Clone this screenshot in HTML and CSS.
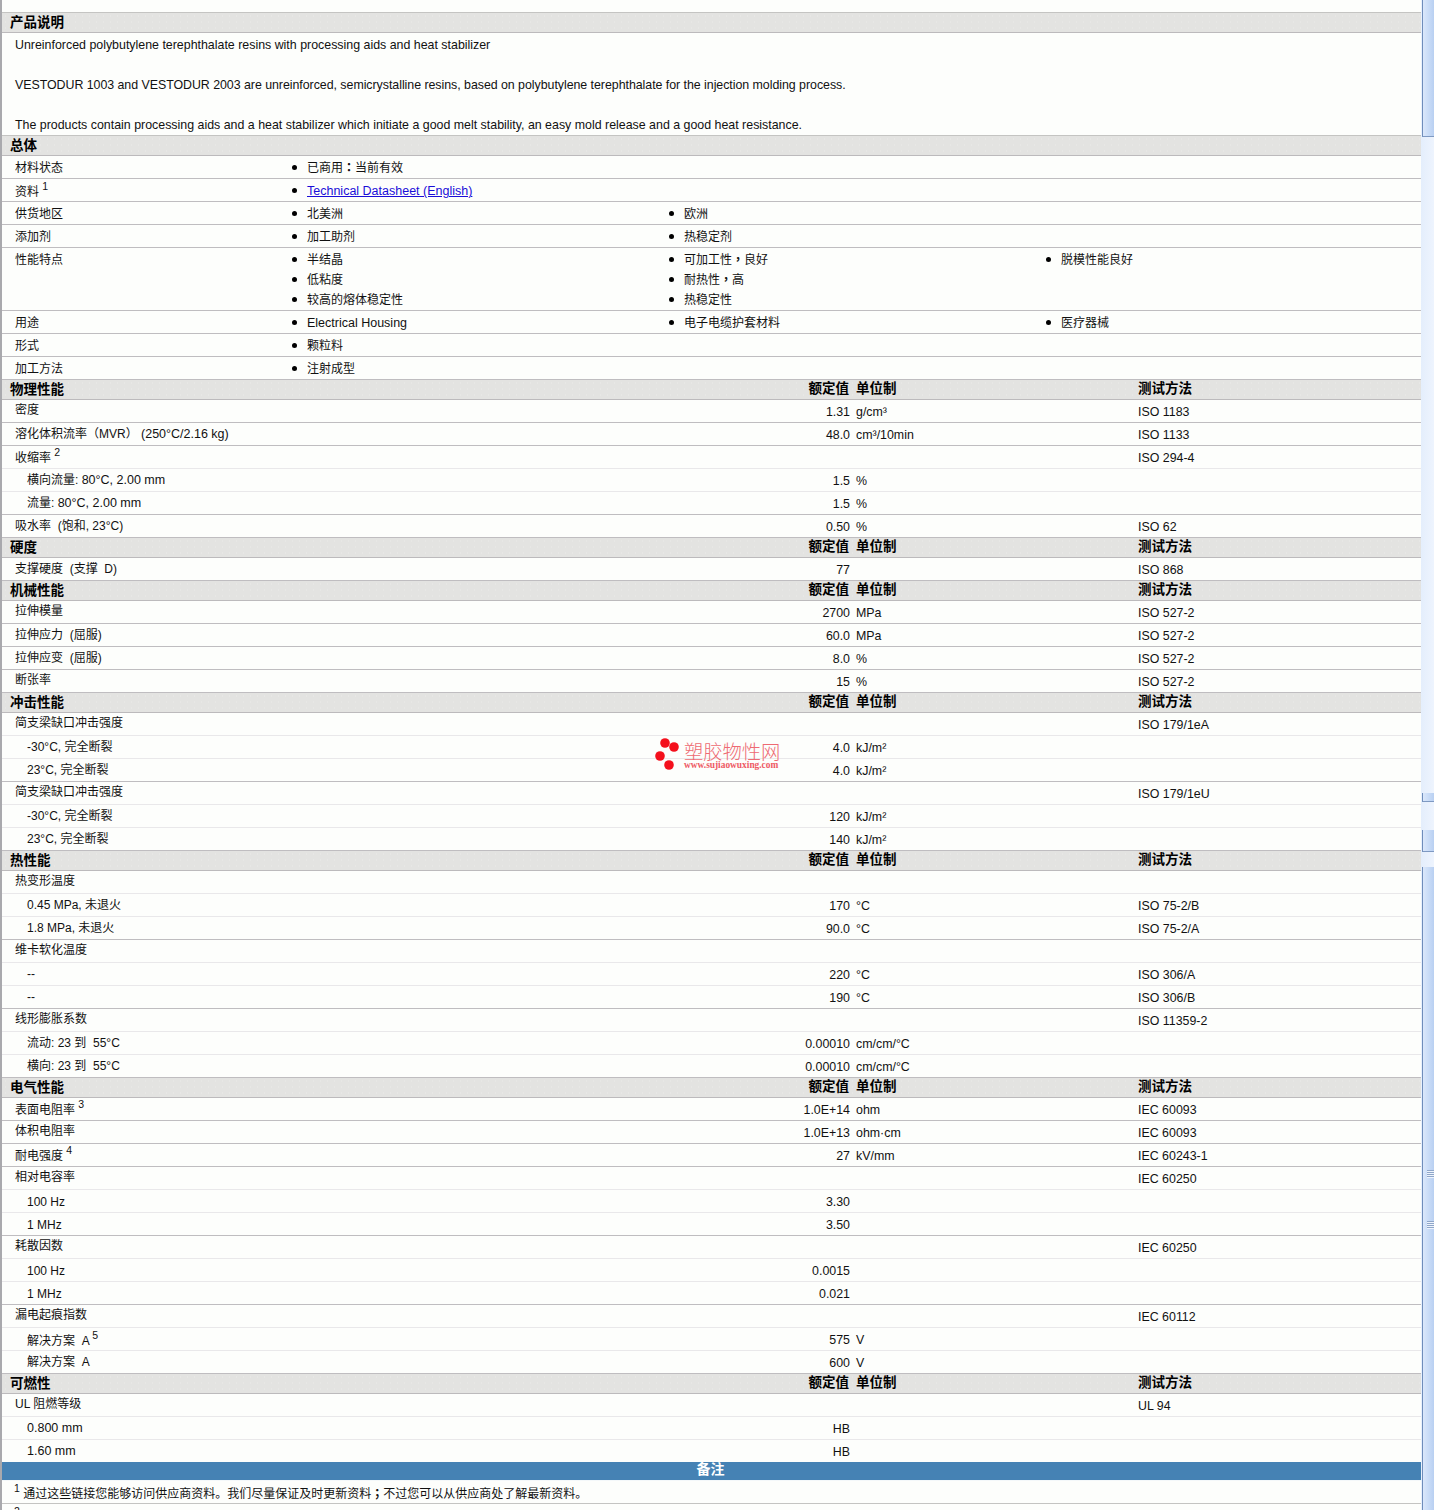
FILE: index.html
```html
<!DOCTYPE html>
<html lang="zh">
<head>
<meta charset="utf-8">
<title>VESTODUR 1003</title>
<link rel="stylesheet" href="styles.css">
</head>
<body>
<div class="page">
  <main class="sheet">
    <div class="section first"><span>产品说明</span></div>
    <div class="desc">
      <p>Unreinforced polybutylene terephthalate resins with processing aids and heat stabilizer</p>
      <p class="tight">VESTODUR 1003 and VESTODUR 2003 are unreinforced, semicrystalline resins, based on polybutylene terephthalate for the injection molding process.</p>
      <p>The products contain processing aids and a heat stabilizer which initiate a good melt stability, an easy mold release and a good heat resistance.</p>
    </div>

    <div class="section"><span>总体</span></div>
    <div class="info"><div class="label">材料状态</div><ul class="items"><li>已商用<span class="cp" lang="zh-Hant">：</span>当前有效</li></ul></div>
    <div class="info"><div class="label low">资料 <sup>1</sup></div><ul class="items"><li><a href="#">Technical Datasheet (English)</a></li></ul></div>
    <div class="info"><div class="label">供货地区</div><ul class="items"><li>北美洲</li><li>欧洲</li></ul></div>
    <div class="info"><div class="label">添加剂</div><ul class="items"><li>加工助剂</li><li>热稳定剂</li></ul></div>
    <div class="info"><div class="label">性能特点</div><ul class="items"><li>半结晶</li><li>可加工性<span class="cp" lang="zh-Hant">，</span>良好</li><li>脱模性能良好</li><li>低粘度</li><li>耐热性<span class="cp" lang="zh-Hant">，</span>高</li><li class="empty"></li><li>较高的熔体稳定性</li><li>热稳定性</li></ul></div>
    <div class="info"><div class="label">用途</div><ul class="items"><li><span class="lat">Electrical Housing</span></li><li>电子电缆护套材料</li><li>医疗器械</li></ul></div>
    <div class="info"><div class="label">形式</div><ul class="items"><li>颗粒料</li></ul></div>
    <div class="info"><div class="label">加工方法</div><ul class="items"><li>注射成型</li></ul></div>

    <div class="section cols"><span>物理性能</span><span class="r">额定值</span><span class="u">单位制</span><span class="m">测试方法</span></div>
    <div class="row"><div class="n">密度</div><div class="v">1.31</div><div class="u">g/cm³</div><div class="t">ISO 1183</div></div>
    <div class="row"><div class="n mid">溶化体积流率（MVR） <span class="lat">(250°C/2.16 kg)</span></div><div class="v">48.0</div><div class="u">cm³/10min</div><div class="t">ISO 1133</div></div>
    <div class="row light"><div class="n low">收缩率 <sup>2</sup></div><div class="v"></div><div class="u"></div><div class="t">ISO 294-4</div></div>
    <div class="row light"><div class="n sub">横向流量: <span class="lat">80°C, 2.00 mm</span></div><div class="v">1.5</div><div class="u">%</div><div class="t"></div></div>
    <div class="row"><div class="n sub">流量: <span class="lat">80°C, 2.00 mm</span></div><div class="v">1.5</div><div class="u">%</div><div class="t"></div></div>
    <div class="row"><div class="n mid">吸水率&nbsp; (饱和, 23°C)</div><div class="v">0.50</div><div class="u">%</div><div class="t">ISO 62</div></div>

    <div class="section cols"><span>硬度</span><span class="r">额定值</span><span class="u">单位制</span><span class="m">测试方法</span></div>
    <div class="row"><div class="n mid">支撑硬度&nbsp; (支撑&nbsp; D)</div><div class="v">77</div><div class="u"></div><div class="t">ISO 868</div></div>

    <div class="section cols"><span>机械性能</span><span class="r">额定值</span><span class="u">单位制</span><span class="m">测试方法</span></div>
    <div class="row"><div class="n">拉伸模量</div><div class="v">2700</div><div class="u">MPa</div><div class="t">ISO 527-2</div></div>
    <div class="row"><div class="n mid">拉伸应力&nbsp; (屈服)</div><div class="v">60.0</div><div class="u">MPa</div><div class="t">ISO 527-2</div></div>
    <div class="row"><div class="n mid">拉伸应变&nbsp; (屈服)</div><div class="v">8.0</div><div class="u">%</div><div class="t">ISO 527-2</div></div>
    <div class="row"><div class="n">断张率</div><div class="v">15</div><div class="u">%</div><div class="t">ISO 527-2</div></div>

    <div class="section cols"><span>冲击性能</span><span class="r">额定值</span><span class="u">单位制</span><span class="m">测试方法</span></div>
    <div class="row light"><div class="n">简支梁缺口冲击强度</div><div class="v"></div><div class="u"></div><div class="t">ISO 179/1eA</div></div>
    <div class="row light"><div class="n sub">-30°C, 完全断裂</div><div class="v">4.0</div><div class="u">kJ/m²</div><div class="t"></div></div>
    <div class="row"><div class="n sub">23°C, 完全断裂</div><div class="v">4.0</div><div class="u">kJ/m²</div><div class="t"></div></div>
    <div class="row light"><div class="n">简支梁缺口冲击强度</div><div class="v"></div><div class="u"></div><div class="t">ISO 179/1eU</div></div>
    <div class="row light"><div class="n sub">-30°C, 完全断裂</div><div class="v">120</div><div class="u">kJ/m²</div><div class="t"></div></div>
    <div class="row"><div class="n sub">23°C, 完全断裂</div><div class="v">140</div><div class="u">kJ/m²</div><div class="t"></div></div>

    <div class="section cols"><span>热性能</span><span class="r">额定值</span><span class="u">单位制</span><span class="m">测试方法</span></div>
    <div class="row light"><div class="n">热变形温度</div><div class="v"></div><div class="u"></div><div class="t"></div></div>
    <div class="row light"><div class="n sub">0.45 MPa, 未退火</div><div class="v">170</div><div class="u">°C</div><div class="t">ISO 75-2/B</div></div>
    <div class="row"><div class="n sub">1.8 MPa, 未退火</div><div class="v">90.0</div><div class="u">°C</div><div class="t">ISO 75-2/A</div></div>
    <div class="row light"><div class="n">维卡软化温度</div><div class="v"></div><div class="u"></div><div class="t"></div></div>
    <div class="row light"><div class="n sub">--</div><div class="v">220</div><div class="u">°C</div><div class="t">ISO 306/A</div></div>
    <div class="row"><div class="n sub">--</div><div class="v">190</div><div class="u">°C</div><div class="t">ISO 306/B</div></div>
    <div class="row light"><div class="n">线形膨胀系数</div><div class="v"></div><div class="u"></div><div class="t">ISO 11359-2</div></div>
    <div class="row light"><div class="n sub">流动: 23 到 &nbsp;55°C</div><div class="v">0.00010</div><div class="u">cm/cm/°C</div><div class="t"></div></div>
    <div class="row"><div class="n sub">横向: 23 到 &nbsp;55°C</div><div class="v">0.00010</div><div class="u">cm/cm/°C</div><div class="t"></div></div>

    <div class="section cols"><span>电气性能</span><span class="r">额定值</span><span class="u">单位制</span><span class="m">测试方法</span></div>
    <div class="row"><div class="n low">表面电阻率 <sup>3</sup></div><div class="v">1.0E+14</div><div class="u">ohm</div><div class="t">IEC 60093</div></div>
    <div class="row"><div class="n">体积电阻率</div><div class="v">1.0E+13</div><div class="u">ohm·cm</div><div class="t">IEC 60093</div></div>
    <div class="row"><div class="n low">耐电强度 <sup>4</sup></div><div class="v">27</div><div class="u">kV/mm</div><div class="t">IEC 60243-1</div></div>
    <div class="row light"><div class="n">相对电容率</div><div class="v"></div><div class="u"></div><div class="t">IEC 60250</div></div>
    <div class="row light"><div class="n sub mid">100 Hz</div><div class="v">3.30</div><div class="u"></div><div class="t"></div></div>
    <div class="row"><div class="n sub mid">1 MHz</div><div class="v">3.50</div><div class="u"></div><div class="t"></div></div>
    <div class="row light"><div class="n">耗散因数</div><div class="v"></div><div class="u"></div><div class="t">IEC 60250</div></div>
    <div class="row light"><div class="n sub mid">100 Hz</div><div class="v">0.0015</div><div class="u"></div><div class="t"></div></div>
    <div class="row"><div class="n sub mid">1 MHz</div><div class="v">0.021</div><div class="u"></div><div class="t"></div></div>
    <div class="row light"><div class="n">漏电起痕指数</div><div class="v"></div><div class="u"></div><div class="t">IEC 60112</div></div>
    <div class="row light"><div class="n sub low">解决方案&nbsp; A <sup>5</sup></div><div class="v">575</div><div class="u">V</div><div class="t"></div></div>
    <div class="row"><div class="n sub">解决方案&nbsp; A</div><div class="v">600</div><div class="u">V</div><div class="t"></div></div>

    <div class="section cols"><span>可燃性</span><span class="r">额定值</span><span class="u">单位制</span><span class="m">测试方法</span></div>
    <div class="row light"><div class="n">UL 阻燃等级</div><div class="v"></div><div class="u"></div><div class="t">UL 94</div></div>
    <div class="row light"><div class="n sub"><span class="lat">0.800 mm</span></div><div class="v">HB</div><div class="u"></div><div class="t"></div></div>
    <div class="row last"><div class="n sub"><span class="lat">1.60 mm</span></div><div class="v">HB</div><div class="u"></div><div class="t"></div></div>

    <div class="notes-title">备注</div>
    <div class="note"><sup>1</sup> 通过这些链接您能够访问供应商资料。我们尽量保证及时更新资料<span class="cp" lang="zh-Hant">；</span>不过您可以从供应商处了解最新资料。</div>
    <div class="note"><sup>2</sup></div>

    <div class="watermark">
      <svg class="wm-dots" width="26" height="34" viewBox="0 0 26 34" aria-hidden="true">
        <circle cx="10" cy="6" r="4.8"/><circle cx="19" cy="10" r="4.8"/><circle cx="5" cy="19" r="4.8"/><circle cx="14" cy="28" r="4.8"/>
      </svg>
      <div class="wm-text">
        <div class="wm-name">塑胶物性网</div>
        <div class="wm-url">www.sujiaowuxing.com</div>
      </div>
    </div>
  </main>

  <aside class="scrollbar" aria-hidden="true">
    <div class="thumb t1"></div>
    <div class="track s1"></div>
    <div class="thumb t2"></div>
    <div class="track s2"></div>
    <div class="thumb t3"></div>
    <div class="track s3"></div>
    <div class="thumb t4"><span class="grip"></span><span class="grip"></span></div>
  </aside>
</div>
</body>
</html>
```

FILE: styles.css
```css
* { box-sizing: border-box; }
html, body { margin: 0; padding: 0; }
body {
  height: 1510px;
  overflow: hidden;
  background: #fdfefc;
  color: #111;
  font: 12px/20px "Liberation Sans", "Noto Sans CJK SC", sans-serif;
}
.page {
  display: flex;
  height: 1510px;
  overflow: hidden;
}
.sheet {
  position: relative;
  width: 1421px;
  flex: none;
  padding-top: 12px;
  border-left: 2px solid #a9a9ad;
}
.lat { font-size: 12.5px; }
.cp { font-family: "Noto Sans CJK TC", sans-serif; font-weight: 700; line-height: 0; }

/* section header bands */
.section {
  height: 20px;
  line-height: 19px;
  padding-left: 8px;
  font-size: 13.5px;
  font-weight: 700;
  color: #000;
  background-color: #e3e3e1;
  background-image: radial-gradient(circle, #e7e7e5 0.6px, transparent 0.8px);
  background-size: 7px 6px;
  border-bottom: 1px solid #bcbabc;
}
.section.first {
  height: 21px;
  border-top: 1px solid #c4c4c2;
}
.section.cols {
  display: grid;
  grid-template-columns: 592px 248px 288px 1fr;
}
.section .r { text-align: right; padding-right: 1px; margin-top: -1px; }
.section .u { padding-left: 6px; margin-top: -1px; }
.section .m { margin-top: -1px; }

/* description */
.desc {
  height: 103px;
  padding: 2px 0 0 13px;
  font-size: 12.4px;
  border-bottom: 1px solid #c4c4c2;
}
.desc p { margin: 0 0 20px; }
.desc p:last-child { margin-bottom: 0; }
.desc .tight { letter-spacing: -0.04px; }

/* general info rows */
.info {
  display: flex;
  align-items: flex-start;
  min-height: 23px;
  border-bottom: 1px solid #bfbdc0;
}
.label {
  flex: none;
  width: 290px;
  height: 22px;
  padding: 2px 0 0 13px;
}
.label.low { padding-top: 3px; }
.items {
  flex: 1;
  margin: 0;
  padding: 2px 0 0;
  list-style: none;
  display: grid;
  grid-template-columns: 377px 377px 1fr;
  grid-auto-rows: 20px;
}
.items li {
  position: relative;
  padding-left: 15px;
  white-space: nowrap;
}
.items li::before {
  content: "";
  position: absolute;
  left: 0;
  top: 7px;
  width: 5px;
  height: 5px;
  border-radius: 50%;
  background: #000;
}
.items li.empty::before { display: none; }
.items a { color: #1a0dd8; font-size: 12.5px; }

/* data rows */
.row {
  display: grid;
  grid-template-columns: 600px 248px 288px 1fr;
  height: 23px;
  line-height: 23px;
  border-bottom: 1px solid #bfbdc0;
}
.row.light { border-bottom-color: #e9e8ea; }
.row.last { height: 22px; border-bottom: 0; }
.n { padding-left: 13px; white-space: nowrap; line-height: 21px; }
.n.sub { padding-left: 25px; line-height: 23px; }
.n.mid { padding-top: 1px; }
.n.low { padding-top: 2px; }
.row .v { text-align: right; padding-top: 1px; font-size: 12.4px; }
.row .u { padding: 1px 0 0 6px; font-size: 12.4px; }
.row .t { padding-top: 1px; font-size: 12.4px; }
sup {
  font-size: 10.5px;
  line-height: 0;
  vertical-align: 6px;
}

/* notes */
.notes-title {
  height: 19px;
  line-height: 15px;
  padding-right: 2px;
  text-align: center;
  font-size: 14px;
  font-weight: 700;
  color: #fff;
  background: #4582b4;
  border-bottom: 1px solid #f4f8fa;
}
.note {
  height: 23px;
  line-height: 26px;
  padding-left: 12px;
  border-bottom: 1px solid #c4c4c2;
}

/* watermark over the table */
.watermark {
  position: absolute;
  left: 653px;
  top: 737px;
  display: flex;
  gap: 3px;
  pointer-events: none;
}
.wm-dots { fill: #f4101c; flex: none; }
.wm-text { padding-top: 7px; }
.wm-name {
  font-size: 19.3px;
  line-height: 18px;
  font-weight: 300;
  color: #ee6a72;
}
.wm-url {
  margin-top: -1px;
  font: 700 9.4px/8px "Liberation Serif", serif;
  color: #ee5a64;
}

/* browser scrollbar strip */
.scrollbar {
  width: 13px;
  flex: none;
  display: flex;
  flex-direction: column;
  background: #e8f1fd;
}
.track { flex: none; background: linear-gradient(90deg, #e4eefc, #eef4fe); }
.thumb {
  flex: none;
  margin-left: 1px;
  border-left: 1px solid #6f8dbb;
  background: linear-gradient(90deg, #dbe8fb, #c9dcf7 50%, #b9d0f2);
}
.t1 { height: 137px; border-bottom: 1px solid #7e99c2; }
.s1 { height: 656px; }
.t2 { height: 9px; border-bottom: 1px solid #7e99c2; }
.s2 { height: 28px; }
.t3 { height: 22px; border-bottom: 1px solid #7e99c2; }
.s3 { height: 15px; }
.t4 {
  height: 643px;
  padding: 303px 0 0 4px;
  display: flex;
  flex-direction: column;
  gap: 43px;
}
.grip {
  display: block;
  width: 7px;
  height: 8px;
  background: repeating-linear-gradient(180deg, #8fa6c9 0 1px, #eef4fd 1px 2px);
}
```
